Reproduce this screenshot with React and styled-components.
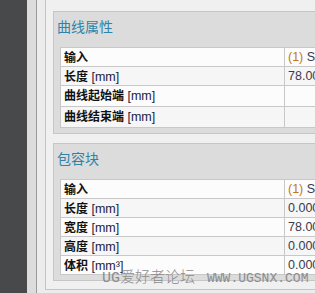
import React from "react";
import styled, { createGlobalStyle } from "styled-components";

const Global = createGlobalStyle`
  html, body { margin: 0; padding: 0; background: #f0f0f0; }
  #root { width: 315px; height: 293px; overflow: hidden; }
`

const Screen = styled.div`
  position: relative;
  display: flex;
  width: 315px;
  height: 293px;
  overflow: hidden;
  font-family: "Liberation Sans", "Noto Sans CJK SC", sans-serif;
`

const DarkStrip = styled.div`
  width: 27px;
  flex: none;
  background: #47494b;
`

const Gutter = styled.div`
  width: 9px;
  flex: none;
  background: #dcdcdc;
  border-right: 1px solid #9a9a9a;
`

const Main = styled.div`
  flex: 1;
  background: #ececec;
  padding-left: 8px;
  overflow: hidden;
`

const Frame = styled.div`
  border-left: 1px solid #c4c4c4;
  border-bottom: 1px solid #c4c4c4;
  background: #f0f0f0;
  padding: 11px 0 7px 7px;
  height: 271px;
  width: 400px;
`

const Panel = styled.div`
  border: 1px solid #c6c6c6;
  border-right: none;
  background: #dcdcdc;
  padding: 0 0 5px 6px;
  margin-bottom: 9px;
`

const Title = styled.div`
  height: 35px;
  margin-left: -3px;
  padding-top: 4px;
  box-sizing: border-box;
  font-family: "Noto Sans CJK SC", sans-serif;
  font-size: 14px;
  line-height: 20px;
  color: #2d84a8;
`

const Table = styled.div`
  border-top: 1px solid #c8c8c8;
  border-left: 1px solid #c8c8c8;
  background: #fafafa;
`

const Row = styled.div`
  display: grid;
  grid-template-columns: 224px 1fr;
  height: ${p => p.$h || 19}px;
  border-bottom: 1px solid #c8c8c8;
  box-sizing: border-box;
  background: ${p => (p.$alt ? "#f6f6f6" : "#fcfcfc")};
`

const Label = styled.div`
  border-right: 1px solid #c8c8c8;
  padding-left: 3px;
  font-family: "Noto Sans CJK SC", sans-serif;
  font-weight: 700;
  font-size: 12px;
  line-height: 18px;
  color: #111;
  white-space: nowrap;
`

const Unit = styled.span`
  font-family: "Liberation Sans", sans-serif;
  font-weight: 400;
  font-size: 12.5px;
  color: #1c1c3c;
`

const Value = styled.div`
  padding-left: 3px;
  font-family: "Liberation Sans", sans-serif;
  font-size: 12.5px;
  line-height: 18px;
  color: #3a3a4e;
  white-space: nowrap;
`

const Paren = styled.span`
  color: #c07a1a;
`

const Watermark = styled.div`
  position: absolute;
  left: 102px;
  top: 271px;
  display: flex;
  align-items: baseline;
  gap: 12px;
  color: #8c8c8c;
  line-height: 16px;
  white-space: nowrap;
  pointer-events: none;
`

const WmCn = styled.span`
  font-family: "Liberation Mono", "Noto Sans CJK SC", monospace;
  font-size: 15px;
  font-weight: 300;
`

const WmEn = styled.span`
  font-family: "Liberation Mono", monospace;
  font-size: 13px;
`

const curve = [
  { label: "输入", value: "sel" },
  { label: "长度", unit: " [mm]", value: "78.0000" },
  { label: "曲线起始端", unit: " [mm]", value: "", h: 21 },
  { label: "曲线结束端", unit: " [mm]", value: "", h: 21 },
]

const box = [
  { label: "输入", value: "sel" },
  { label: "长度", unit: " [mm]", value: "0.0000" },
  { label: "宽度", unit: " [mm]", value: "78.0000" },
  { label: "高度", unit: " [mm]", value: "0.0000" },
  { label: "体积", unit: " [mm³]", value: "0.0000" },
]

function Section({ title, rows }) {
  return (
    <Panel>
      <Title>{title}</Title>
      <Table>
        {rows.map((r, i) => (
          <Row key={i} $alt={i % 2 === 1} $h={r.h}>
            <Label>
              {r.label}
              {r.unit && <Unit>{r.unit}</Unit>}
            </Label>
            <Value>
              {r.value === "sel" ? (
                <>
                  <Paren>(1)</Paren> Spline
                </>
              ) : (
                r.value
              )}
            </Value>
          </Row>
        ))}
      </Table>
    </Panel>
  )
}

export default function App() {
  return (
    <Screen>
      <Global />
      <DarkStrip />
      <Gutter />
      <Main>
        <Frame>
          <Section title="曲线属性" rows={curve} />
          <Section title="包容块" rows={box} />
        </Frame>
      </Main>
      <Watermark>
        <WmCn>UG爱好者论坛</WmCn>
        <WmEn>WWW.UGSNX.COM</WmEn>
      </Watermark>
    </Screen>
  )
}
